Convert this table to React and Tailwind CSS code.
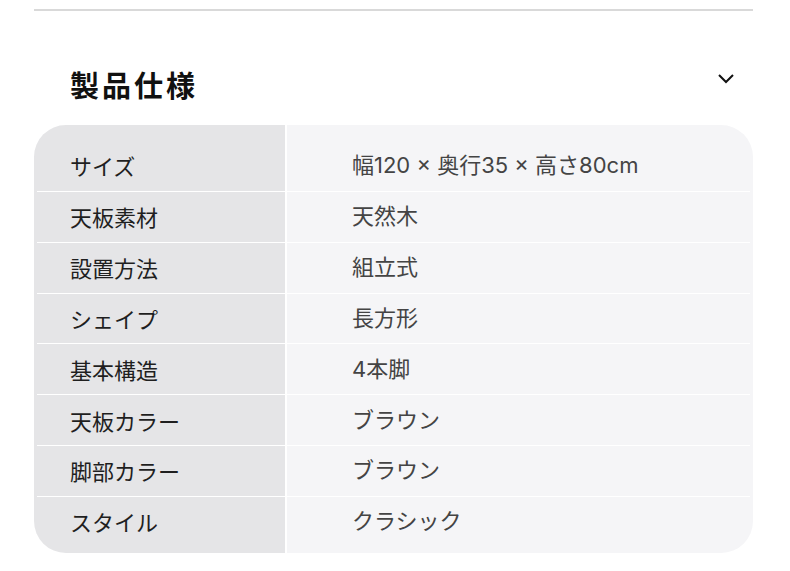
const specs = [
  { label: "サイズ", value: "幅120 × 奥行35 × 高さ80cm" },
  { label: "天板素材", value: "天然木" },
  { label: "設置方法", value: "組立式" },
  { label: "シェイプ", value: "長方形" },
  { label: "基本構造", value: "4本脚" },
  { label: "天板カラー", value: "ブラウン" },
  { label: "脚部カラー", value: "ブラウン" },
  { label: "スタイル", value: "クラシック" },
];

function Divider() {
  return (
    <div className="flex h-px">
      <div className="w-[3px] bg-[#e5e5e7]"></div>
      <div className="flex-1 bg-white"></div>
      <div className="w-[3px] bg-[#f5f5f7]"></div>
    </div>
  );
}

function SpecRow({ label, value, first, last }) {
  return (
    <div
      className={
        first ? "flex h-[52px]" : last ? "flex h-[50px]" : "flex h-[49.8px]"
      }
    >
      <div className="w-[251px] bg-[#e5e5e7] flex items-center pl-[36px] text-[22px] text-[#1f1f1f]">
        {label}
      </div>
      <div className="w-[2px] bg-white"></div>
      <div
        className="flex-1 bg-[#f5f5f7] flex items-center pl-[65px] text-[22px] text-[#444]"
        style={{ fontFamily: 'Inter, "Noto Sans CJK JP", sans-serif' }}
      >
        {value}
      </div>
    </div>
  );
}

export default function App() {
  return (
    <div
      className="w-[790px] h-[571px] bg-white pl-[34px] pr-[37px] pt-[9px]"
      style={{ fontFamily: '"Noto Sans CJK JP", "Noto Sans", sans-serif' }}
    >
      <div className="border-t-2 border-[#d9d9d9]"></div>
      <div className="h-[114px] flex items-end justify-between pb-[26px] pl-[36px] pr-[19px]">
        <h2 className="text-[29px] leading-none font-bold tracking-[3px] text-[#111]">
          製品仕様
        </h2>
        <svg
          width="16"
          height="10"
          viewBox="0 0 16 10"
          className="mb-[15px]"
          fill="none"
          stroke="#111"
          strokeWidth="2"
        >
          <polyline points="1,1 8,8 15,1" />
        </svg>
      </div>
      <div className="rounded-[32px] overflow-hidden flex flex-col">
        <div className="flex h-[14px]">
          <div className="w-[251px] bg-[#e5e5e7]"></div>
          <div className="w-[2px] bg-white"></div>
          <div className="flex-1 bg-[#f5f5f7]"></div>
        </div>
        {specs.map((s, i) => (
          <div key={s.label}>
            {i > 0 && <Divider />}
            <SpecRow
              label={s.label}
              value={s.value}
              first={i === 0}
              last={i === specs.length - 1}
            />
          </div>
        ))}
        <div className="flex h-[6px]">
          <div className="w-[251px] bg-[#e5e5e7]"></div>
          <div className="w-[2px] bg-white"></div>
          <div className="flex-1 bg-[#f5f5f7]"></div>
        </div>
      </div>
    </div>
  );
}
